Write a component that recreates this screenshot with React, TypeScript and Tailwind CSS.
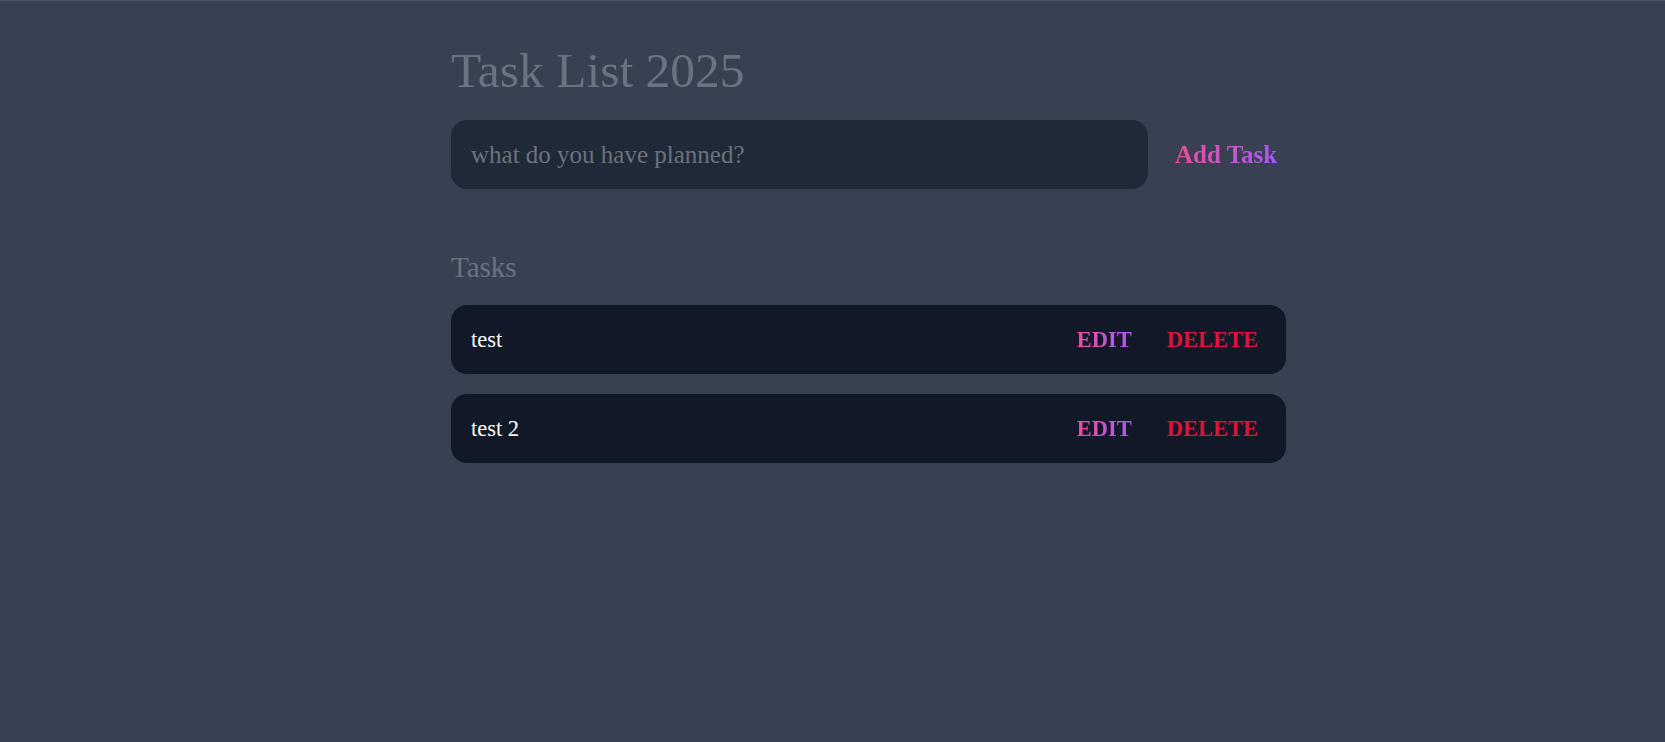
import { useState } from "react"

interface Task {
  id: number
  text: string
}

const serif = "font-['Liberation_Serif','Times_New_Roman',serif]"

export default function App() {
  const [tasks] = useState<Task[]>([
    { id: 1, text: "test" },
    { id: 2, text: "test 2" },
  ])
  const [value, setValue] = useState("")

  return (
    <main className={`min-h-screen bg-[#374151] border-t border-[#4b5563] text-white ${serif}`}>
      <div className="ml-[451px] w-[835px] pt-[46px]">
        {/* Header */}
        <h1 className={`text-[49.5px] leading-[48px] text-[#6b7280] ${serif}`}>Task List 2025</h1>

        <div className="mt-[25px] flex items-center gap-[27px]">
          <input
            value={value}
            onChange={(e) => setValue(e.target.value)}
            placeholder="what do you have planned?"
            className={`w-[697px] h-[69px] rounded-2xl bg-[#1f2937] px-5 text-[25px] text-white placeholder:text-[#6b7280] outline-none ${serif}`}
          />
          <button className={`text-[25px] font-bold bg-gradient-to-r from-[#ec4899] to-[#a855f7] bg-clip-text text-transparent ${serif}`}>
            Add Task
          </button>
        </div>

        {/* Tasks */}
        <h2 className={`mt-[64px] text-[29px] leading-[28px] text-[#6b7280] ${serif}`}>Tasks</h2>

        <div className="mt-[24px] flex flex-col gap-5">
          {tasks.map((task) => (
            <div
              key={task.id}
              className="h-[69px] rounded-2xl bg-[#111827] pl-5 pr-7 flex items-center justify-between"
            >
              <span className={`text-[22.5px] text-white ${serif}`}>{task.text}</span>
              <div className="flex items-center gap-[35px]">
                <button className={`text-[22.5px] font-bold bg-gradient-to-r from-[#ec4899] to-[#a855f7] bg-clip-text text-transparent ${serif}`}>
                  EDIT
                </button>
                <button className={`text-[22.5px] font-bold text-[#dc143c] ${serif}`}>DELETE</button>
              </div>
            </div>
          ))}
        </div>
      </div>
    </main>
  )
}
